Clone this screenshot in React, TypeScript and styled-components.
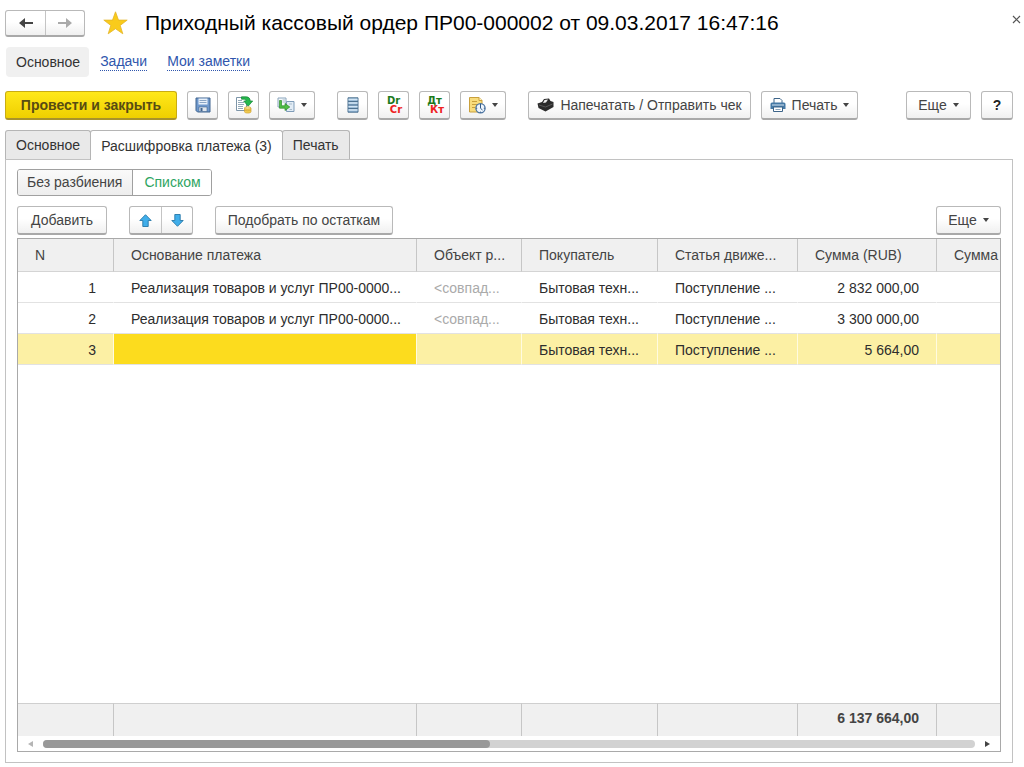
import React from "react";
import styled, { createGlobalStyle, css } from "styled-components";

const GlobalStyle = createGlobalStyle`
  *, *::before, *::after { box-sizing: border-box; }
  body { margin: 0; background: #fff; }
  body, button { font-family: "Liberation Sans", Arial, sans-serif; font-size: 14px; color: #444; }
`;

const raised = css`
  border: 1px solid #b9b9b9;
  border-bottom: 2px solid #a9a9a9;
  border-radius: 3px;
  background: linear-gradient(#ffffff 45%, #f0f0f0);
`;

const Page = styled.div`
  min-height: 100vh;
  display: flex;
  flex-direction: column;
  padding: 0 11px 4px 5px;
`;

const Header = styled.header`
  display: flex;
  align-items: center;
  height: 46px;
  margin-right: -8px;
`;

const ButtonPair = styled.div`
  ${raised}
  display: flex;
  overflow: hidden;
`;

const PairButton = styled.button<{ $width: number; $height: number }>`
  width: ${(p) => p.$width}px;
  height: ${(p) => p.$height}px;
  padding: 0;
  border: 0;
  background: none;
  display: flex;
  align-items: center;
  justify-content: center;
  & + & { border-left: 1px solid #c4c4c4; }
`;

const Star = styled.button`
  display: flex;
  padding: 0;
  border: 0;
  background: none;
  margin: 0 17px 0 18px;
`;

const Title = styled.h1`
  margin: 0;
  flex: 1;
  font-size: 21px;
  line-height: 26px;
  font-weight: 400;
  color: #000;
  white-space: nowrap;
`;

const CloseButton = styled.button`
  display: flex;
  padding: 0;
  border: 0;
  background: none;
  margin-bottom: 8px;
`;

const Sections = styled.nav`
  display: flex;
  align-items: center;
  gap: 20px;
  height: 31px;
  margin-left: 1px;
`;

const CurrentSection = styled.span`
  padding: 0 9px 0 10px;
  margin-right: -9px;
  border-radius: 4px;
  background: #f0f0f0;
  line-height: 30px;
  color: #333;
`;

const SectionLink = styled.a`
  line-height: 17px;
  padding-top: 1px;
  color: #2f56ad;
  text-decoration: none;
  border-bottom: 1px dotted #2f56ad;
`;

const Toolbar = styled.div<{ $top: number }>`
  display: flex;
  align-items: center;
  gap: 22px;
  margin-top: ${(p) => p.$top}px;
`;

const Group = styled.div<{ $end?: boolean }>`
  display: flex;
  gap: 10px;
  margin-left: ${(p) => (p.$end ? "auto" : 0)};
`;

const Button = styled.button<{ $width: number; $primary?: boolean; $strong?: boolean }>`
  ${raised}
  width: ${(p) => p.$width}px;
  height: 29px;
  padding: 0;
  display: flex;
  align-items: center;
  justify-content: center;
  gap: 6px;
  white-space: nowrap;
  ${(p) =>
    p.$strong &&
    css`
      font-weight: 700;
      color: #222;
    `}
  ${(p) =>
    p.$primary &&
    css`
      font-weight: 700;
      color: #574c12;
      background: linear-gradient(#ffe81a, #efcf00);
      border-color: #c9ac12;
      border-bottom-color: #a8922c;
    `}
`;

const Posting = styled.span`
  display: flex;
  flex-direction: column;
  font: 700 10px/9px "DejaVu Sans", sans-serif;
  color: #1c7a1c;
`;

const PostingCredit = styled.span`
  padding-left: 5px;
  color: #ee2222;
`;

const Tabs = styled.div`
  display: flex;
  margin-top: 10px;
`;

const Tab = styled.button<{ $active?: boolean }>`
  height: ${(p) => (p.$active ? 30 : 29)}px;
  padding: 0 10px;
  border: 1px solid #b5b5b5;
  border-bottom: 0;
  border-radius: 3px 3px 0 0;
  background: ${(p) => (p.$active ? "#fff" : "#e9e9e9")};
  color: #333;
  margin-bottom: ${(p) => (p.$active ? -1 : 0)}px;
  z-index: ${(p) => (p.$active ? 1 : 0)};
  & + & { margin-left: -1px; }
`;

const Panel = styled.section`
  flex: 1;
  display: flex;
  flex-direction: column;
  padding: 9px 11px 10px;
  border: 1px solid #c2c2c2;
`;

const Segments = styled.div`
  display: flex;
  align-self: flex-start;
  border: 1px solid #a0a0a0;
  border-radius: 3px;
  overflow: hidden;
`;

const Segment = styled.button<{ $active?: boolean }>`
  height: 25px;
  padding: 0 10px 1px 9px;
  border: 0;
  background: ${(p) => (p.$active ? "#fff" : "linear-gradient(#fafafa, #ededed)")};
  color: ${(p) => (p.$active ? "#2ea562" : "#444")};
  & + & { border-left: 1px solid #a0a0a0; padding-left: 11px; }
`;

const Grid = styled.div`
  flex: 1;
  display: flex;
  flex-direction: column;
  margin-top: 3px;
  border: 1px solid #a9a9a9;
  overflow: hidden;
`;

const TableArea = styled.div`
  flex: 1;
  display: grid;
`;

const Table = styled.table`
  width: 100%;
  height: 100%;
  table-layout: fixed;
  border-collapse: separate;
  border-spacing: 0;
`;

const cell = css`
  overflow: hidden;
  white-space: nowrap;
  font-weight: 400;
  text-align: left;
  padding: 0 0 0 17px;
`;

const HeadCell = styled.th`
  ${cell}
  height: 33px;
  background: #f0f0f0;
  border-bottom: 1px solid #d4d4d4;
  color: #444;
  & + & { border-left: 1px solid #c6c6c6; }
`;

const Row = styled.tr<{ $selected?: boolean }>`
  background: ${(p) => (p.$selected ? "#fcf0a4" : "#fff")};
  td + td { border-left: 1px solid ${(p) => (p.$selected ? "#fffbe0" : "transparent")}; }
`;

const Cell = styled.td<{ $number?: boolean; $muted?: boolean; $current?: boolean }>`
  ${cell}
  height: 31px;
  padding-top: 1px;
  border-bottom: 1px solid #e2e2e2;
  color: ${(p) => (p.$muted ? "#aaa" : "#2d2d2d")};
  ${(p) => p.$number && "text-align: right; padding: 1px 17px 0 0;"}
  ${(p) => p.$current && "background: #fcdc1e;"}
`;

const Filler = styled.td`
  padding: 0;
`;

const FootCell = styled.td`
  ${cell}
  height: 33px;
  padding: 0 17px 4px 0;
  text-align: right;
  font-weight: 700;
  background: #f0f0f0;
  border-top: 1px solid #cfcfcf;
  & + & { border-left: 1px solid #c6c6c6; }
`;

const ScrollBar = styled.div`
  display: flex;
  align-items: center;
  gap: 9px;
  height: 15px;
  padding: 0 8px;
`;

const ScrollButton = styled.button`
  display: flex;
  padding: 0;
  border: 0;
  background: none;
`;

const Track = styled.div`
  flex: 1;
  height: 8px;
  border-radius: 4px;
  background: #d2d2d2;
`;

const Thumb = styled.div`
  width: 48%;
  height: 8px;
  border-radius: 4px;
  background: #999;
`;

const Caret = () => (
  <svg width="6" height="4" viewBox="0 0 6 4" aria-hidden="true">
    <path d="M0 0h6L3 4z" fill="#444" />
  </svg>
);

const BackArrow = ({ color, flip }: { color: string; flip?: boolean }) => (
  <svg width="16" height="12" viewBox="0 0 16 12" aria-hidden="true">
    <path
      d={flip ? "M1 4.900h8V.9L15 6l-6 5.100v-4H1z" : "M15 4.900H7V.9L1 6l6 5.100v-4h8z"}
      fill={color}
    />
  </svg>
);

const StarIcon = () => (
  <svg width="25" height="24" viewBox="0 0 25 24" aria-hidden="true">
    <path d="M12.5 0.8l3 8.3h8.700l-7 5.300 2.600 8.400-7.300-5.100-7.300 5.100 2.600-8.400-7-5.300h8.700z" fill="#f9cb1b" stroke="#e5b52a" strokeWidth="0.8" />
  </svg>
);

const CloseIcon = () => (
  <svg width="9" height="9" viewBox="0 0 9 9" aria-hidden="true">
    <path d="M1 1l7 7M8 1L1 8" stroke="#555" strokeWidth="1.2" />
  </svg>
);

const SaveIcon = () => (
  <svg width="16" height="16" viewBox="0 0 16 16" aria-hidden="true">
    <path d="M1 1h14v14H2.500L1 13.500z" fill="#6f98cc" stroke="#41648f" />
    <path d="M3.500 1.500h9v6h-9z" fill="#e9f1fa" />
    <path d="M4.500 3.500h7M4.500 5.500h7" stroke="#8aa5c5" />
    <path d="M4 10h8v4.500H4z" fill="#dfe6ee" stroke="#41648f" strokeWidth="0.6" />
    <path d="M5.500 11h2v3h-2z" fill="#41648f" />
  </svg>
);

const PostIcon = () => (
  <svg width="18" height="18" viewBox="0 0 18 18" aria-hidden="true">
    <path d="M1.500 1.500h10v13h-10z" fill="#fff" stroke="#7d95a8" />
    <path d="M3 4.500h4M3 6.500h6M3 8.500h6M3 10.500h5M3 12.500h5" stroke="#93a9b8" />
    <path d="M6.500 .8h4.500c3 0 4.200 1.800 4.200 4.200h2.500L13.200 10.200 8.700 5H11c0-1.300-.8-1.800-2-1.800H6.500z" fill="#25b84c" stroke="#168438" strokeWidth="0.7" />
    <path d="M9.500 12v3.700c0 1.800 6.500 1.800 6.500 0V12z" fill="#f3cf55" stroke="#cf9f2e" strokeWidth="0.7" />
    <ellipse cx="12.750" cy="12" rx="3.250" ry="1.200" fill="#fdeaa0" stroke="#cf9f2e" strokeWidth="0.7" />
    <path d="M9.500 13.900c1 1.200 5.500 1.200 6.500 0" fill="none" stroke="#cf9f2e" strokeWidth="0.7" />
  </svg>
);

const BasedOnIcon = () => (
  <svg width="18" height="16" viewBox="0 0 18 16" aria-hidden="true">
    <path d="M1 1h8v9H1z" fill="#f4f8fb" stroke="#8aa5bd" />
    <path d="M5.500 3h2.500M5.500 5h2.500" stroke="#a9bccb" />
    <path d="M9.500 4.500h7.500v10H9.500z" fill="#e2ecf5" stroke="#7f9cb8" />
    <path d="M12 7h3M12.500 12.500h2.500" stroke="#a9bccb" />
    <path d="M2.500 3.500h2v5.300H8V6.500l4.800 3.500L8 13.500v-2.300H2.500z" fill="#4fbe45" stroke="#2c8c2c" strokeWidth="0.7" />
  </svg>
);

const RegisterIcon = () => (
  <svg width="12" height="16" viewBox="0 0 12 16" aria-hidden="true">
    <path d="M1 .8h10v14.400H1z" fill="#8fb2d2" stroke="#4e7291" />
    <path d="M1.500 2.500h9M1.500 6h9M1.500 9.500h9M1.500 13h9" stroke="#d3e5f4" strokeWidth="1.3" />
    <path d="M1 4.500h10M1 8h10M1 11.500h10" stroke="#4e7291" />
  </svg>
);

const ScheduleIcon = () => (
  <svg width="18" height="18" viewBox="0 0 18 18" aria-hidden="true">
    <path d="M1.500 1.500h9.500l3 3V16H1.500z" fill="#f8dc7c" stroke="#c9a03c" />
    <path d="M11 1.500v3h3" fill="#fff5cb" stroke="#c9a03c" />
    <path d="M4 5.500h5M4 8.500h5M4 11.500h3" stroke="#c9a03c" />
    <circle cx="12.500" cy="12.300" r="4.600" fill="#eef5fc" stroke="#47719f" strokeWidth="1.3" />
    <path d="M12.500 9v3.300l2 1.700M12.500 8v1M12.500 15.600v1M8.200 12.300h1M15.800 12.300h1" fill="none" stroke="#315a88" />
  </svg>
);

const RegisterPrinterIcon = () => (
  <svg width="17" height="14" viewBox="0 0 17 14" aria-hidden="true">
    <path d="M.5 5.500l4.500-1.500 2-3 5-.5 1.500 2.500 3 1v5l-8 4.500L1.500 10z" fill="#2b2b2b" />
    <path d="M7.500 2l3.500-.5L9 4.500 6 5z" fill="#eee" />
    <path d="M2 7l6.500 2L15.500 6" fill="none" stroke="#777" strokeWidth="0.6" />
  </svg>
);

const PrinterIcon = () => (
  <svg width="16" height="16" viewBox="0 0 16 16" aria-hidden="true">
    <path d="M4 6V1.500h6l2 2V6" fill="#fff" stroke="#3d6489" />
    <path d="M2 5.500h12a1.500 1.500 0 0 1 1.500 1.500V12H.5V7A1.500 1.500 0 0 1 2 5.500z" fill="#4579a5" />
    <path d="M2 8h12" stroke="#d7e6f3" />
    <path d="M3.500 10h9v4.500h-9z" fill="#fff" stroke="#3d6489" />
    <path d="M5.500 12.500h5" stroke="#8ba5bc" />
  </svg>
);

const MoveArrow = ({ down }: { down?: boolean }) => (
  <svg width="13" height="13" viewBox="0 0 13 13" aria-hidden="true">
    <path
      d={down ? "M6.500 12.300L.8 6.500h3v-6h5.400v6h3z" : "M6.500 .7l5.700 5.800h-3v6H3.800v-6h-3z"}
      fill="#40aeea"
      stroke="#2577a8"
      strokeWidth="0.9"
    />
  </svg>
);

const columns = [
  { title: "N", width: 95 },
  { title: "Основание платежа", width: 303 },
  { title: "Объект р...", width: 105 },
  { title: "Покупатель", width: 136 },
  { title: "Статья движе...", width: 140 },
  { title: "Сумма (RUB)", width: 139 },
  { title: "Сумма", width: undefined },
];

const rows = [
  { n: 1, basis: "Реализация товаров и услуг ПР00-0000...", object: "<совпад...", sum: "2 832 000,00" },
  { n: 2, basis: "Реализация товаров и услуг ПР00-0000...", object: "<совпад...", sum: "3 300 000,00" },
  { n: 3, basis: "", object: "", sum: "5 664,00", selected: true },
];

export default function App() {
  return (
    <>
      <GlobalStyle />
      <Page>
        <Header>
          <ButtonPair>
            <PairButton $width={39} $height={24} aria-label="Назад"><BackArrow color="#444" /></PairButton>
            <PairButton $width={39} $height={24} aria-label="Вперед"><BackArrow color="#aaa" flip /></PairButton>
          </ButtonPair>
          <Star aria-label="Избранное"><StarIcon /></Star>
          <Title>Приходный кассовый ордер ПР00-000002 от 09.03.2017 16:47:16</Title>
          <CloseButton aria-label="Закрыть"><CloseIcon /></CloseButton>
        </Header>

        <Sections>
          <CurrentSection>Основное</CurrentSection>
          <SectionLink href="#tasks">Задачи</SectionLink>
          <SectionLink href="#notes">Мои заметки</SectionLink>
        </Sections>

        <Toolbar $top={14}>
          <Group>
            <Button $width={172} $primary>Провести и закрыть</Button>
            <Button $width={31} aria-label="Записать"><SaveIcon /></Button>
            <Button $width={31} aria-label="Провести"><PostIcon /></Button>
            <Button $width={46} aria-label="Создать на основании"><BasedOnIcon /><Caret /></Button>
          </Group>
          <Group>
            <Button $width={31} aria-label="Движения"><RegisterIcon /></Button>
            <Button $width={31}><Posting>Dr<PostingCredit>Cr</PostingCredit></Posting></Button>
            <Button $width={31}><Posting>Дт<PostingCredit>Кт</PostingCredit></Posting></Button>
            <Button $width={46} aria-label="Задания"><ScheduleIcon /><Caret /></Button>
          </Group>
          <Group>
            <Button $width={223}><RegisterPrinterIcon />Напечатать / Отправить чек</Button>
            <Button $width={97}><PrinterIcon />Печать<Caret /></Button>
          </Group>
          <Group $end>
            <Button $width={65}>Еще<Caret /></Button>
            <Button $width={32} $strong>?</Button>
          </Group>
        </Toolbar>

        <Tabs role="tablist">
          <Tab role="tab">Основное</Tab>
          <Tab role="tab" aria-selected $active>Расшифровка платежа (3)</Tab>
          <Tab role="tab">Печать</Tab>
        </Tabs>

        <Panel>
          <Segments>
            <Segment>Без разбиения</Segment>
            <Segment $active>Списком</Segment>
          </Segments>

          <Toolbar $top={10}>
            <Button $width={90}>Добавить</Button>
            <ButtonPair>
              <PairButton $width={31} $height={26} aria-label="Переместить вверх"><MoveArrow /></PairButton>
              <PairButton $width={31} $height={26} aria-label="Переместить вниз"><MoveArrow down /></PairButton>
            </ButtonPair>
            <Button $width={178}>Подобрать по остаткам</Button>
            <Group $end>
              <Button $width={65}>Еще<Caret /></Button>
            </Group>
          </Toolbar>

          <Grid>
            <TableArea>
              <Table>
                <colgroup>
                  {columns.map((c, i) => <col key={i} width={c.width} />)}
                </colgroup>
                <thead>
                  <tr>
                    {columns.map((c, i) => <HeadCell key={i}>{c.title}</HeadCell>)}
                  </tr>
                </thead>
                <tbody>
                  {rows.map((r) => (
                    <Row key={r.n} $selected={r.selected}>
                      <Cell $number>{r.n}</Cell>
                      <Cell $current={r.selected}>{r.basis}</Cell>
                      <Cell $muted>{r.object}</Cell>
                      <Cell>Бытовая техн...</Cell>
                      <Cell>Поступление ...</Cell>
                      <Cell $number>{r.sum}</Cell>
                      <Cell />
                    </Row>
                  ))}
                  <tr><Filler colSpan={7} /></tr>
                </tbody>
                <tfoot>
                  <tr>
                    {columns.map((_, i) => <FootCell key={i}>{i === 5 ? "6 137 664,00" : ""}</FootCell>)}
                  </tr>
                </tfoot>
              </Table>
            </TableArea>
            <ScrollBar>
              <ScrollButton aria-label="Прокрутить влево">
                <svg width="8" height="8" viewBox="0 0 8 8"><path d="M7 1v6L2 4z" fill="#b5b5b5" /></svg>
              </ScrollButton>
              <Track><Thumb /></Track>
              <ScrollButton aria-label="Прокрутить вправо">
                <svg width="8" height="8" viewBox="0 0 8 8"><path d="M1 1v6l5-3z" fill="#444" /></svg>
              </ScrollButton>
            </ScrollBar>
          </Grid>
        </Panel>
      </Page>
    </>
  );
}
